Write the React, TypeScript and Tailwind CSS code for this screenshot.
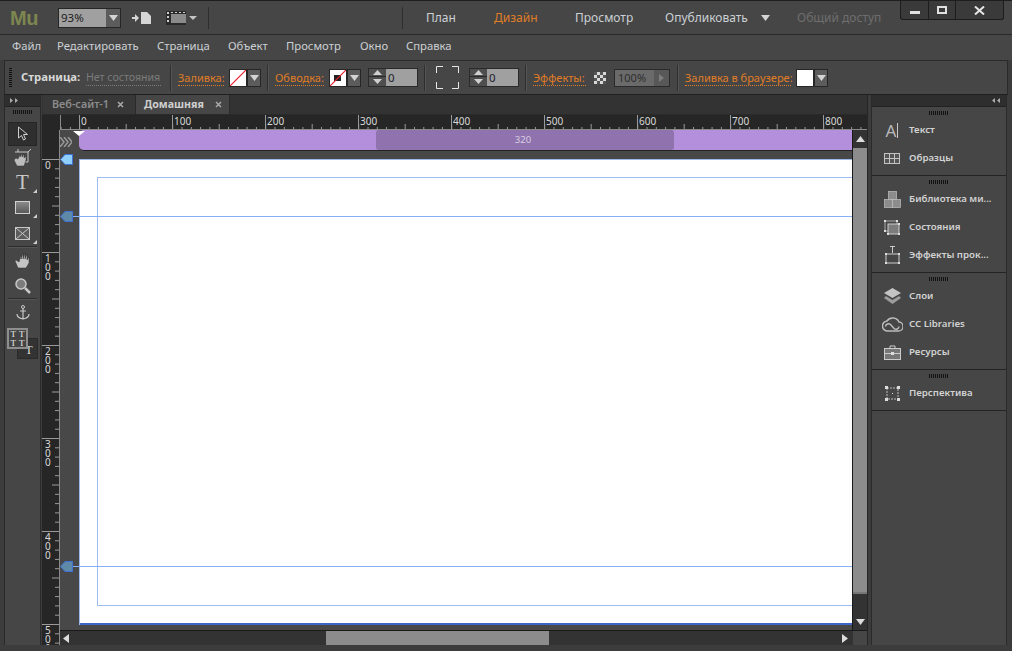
const font = { fontFamily: '"Noto Sans", "Liberation Sans", sans-serif' };

const MENU: [string, string][] = [
  ["Файл", "w-[45px]"],
  ["Редактировать", "w-[100px]"],
  ["Страница", "w-[71px]"],
  ["Объект", "w-[58px]"],
  ["Просмотр", "w-[74px]"],
  ["Окно", "w-[46px]"],
  ["Справка", "w-[60px]"],
];
const TOP_RULER = [0, 100, 200, 300, 400, 500, 600, 700, 800];
const LEFT_RULER = [["0"], ["1", "0", "0"], ["2", "0", "0"], ["3", "0", "0"], ["4", "0", "0"], ["5", "0", "0"]];

function Caret({ dark = false }: { dark?: boolean }) {
  return (
    <svg width="9" height="6" viewBox="0 0 9 6">
      <path d="M0 0h9L4.5 6z" fill={dark ? "#9a9a9a" : "#d4d4d4"} />
    </svg>
  );
}

function DropBtn() {
  return (
    <div className="w-[14px] h-[18px] bg-[#5c5c5c] border border-[#262626] flex items-center justify-center">
      <Caret />
    </div>
  );
}

function Swatch({ stroke = false, none = true }: { stroke?: boolean; none?: boolean }) {
  return (
    <div className="w-[18px] h-[18px] bg-white border border-[#262626] shrink-0">
      {none && (
        <svg width="16" height="16" viewBox="0 0 16 16" className="block">
          {stroke && <rect x="4" y="5" width="7" height="6" fill="#222" />}
          <path d="M0 16L16 0" stroke="#e8202c" strokeWidth="1.2" />
        </svg>
      )}
    </div>
  );
}

function Stepper() {
  return (
    <div className="flex h-[19px] border border-[#2a2a2a] shrink-0">
      <div className="w-[17px] flex flex-col bg-[#4e4e4e]">
        <div className="h-[8px] flex items-center justify-center border-b border-[#2a2a2a]">
          <svg width="9" height="5" viewBox="0 0 9 5"><path d="M0 5h9L4.5 0z" fill="#cfcfcf" /></svg>
        </div>
        <div className="flex-1 flex items-center justify-center">
          <svg width="9" height="5" viewBox="0 0 9 5"><path d="M0 0h9L4.5 5z" fill="#cfcfcf" /></svg>
        </div>
      </div>
      <div className="w-[31px] bg-[#a0a0a0] text-[#20202c] text-[11.5px] leading-[17px] pl-[2px]">0</div>
    </div>
  );
}

function Sep({ className = "" }: { className?: string }) {
  return <div className={`w-px h-[26px] bg-[#2e2e2e] border-r border-[#555] box-content shrink-0 ${className}`} />;
}

function Grip({ w = 20 }: { w?: number }) {
  return (
    <svg width={w} height="4" viewBox={`0 0 ${w} 4`} className="block">
      {Array.from({ length: Math.floor(w / 2) }).map((_, i) => (
        <rect key={i} x={i * 2} y="0" width="1" height="4" fill="#111" />
      ))}
    </svg>
  );
}

function Orange({ children, className = "" }: { children: string; className?: string }) {
  return (
    <span className={`text-[11px] leading-[15px] text-[#e07d25] border-b border-dotted border-[#e07d25] whitespace-nowrap shrink-0 ${className}`}>
      {children}
    </span>
  );
}

function PanelItem({ icon, label }: { icon: React.ReactNode; label: string }) {
  return (
    <div className="h-[28px] flex items-center">
      <div className="w-[37px] flex justify-center pl-[3px] shrink-0">{icon}</div>
      <span className="text-[9.7px] font-semibold text-[#d2d2d2] whitespace-nowrap">{label}</span>
    </div>
  );
}

function PanelGroup({ children, h }: { children: React.ReactNode; h: string }) {
  return (
    <div className={`border-b border-[#242424] ${h}`}>
      <div className="flex justify-center pt-[4px] pb-[1px]"><Grip w={20} /></div>
      {children}
    </div>
  );
}

function Tool({ children, h = "h-[25px]", corner = false }: { children: React.ReactNode; h?: string; corner?: boolean }) {
  return (
    <div className={`relative flex items-center justify-center ${h}`}>
      {children}
      {corner && <div className="absolute right-[3px] bottom-[2px] w-0 h-0 border-l-[4px] border-l-transparent border-b-[4px] border-b-[#cfcfcf]" />}
    </div>
  );
}

function TopRuler() {
  return (
    <div className="relative h-[15px] shrink-0 bg-[#262626] pl-[37px] flex overflow-hidden">
      {TOP_RULER.map((n) => (
        <div key={n} className="w-[93px] shrink-0 border-l border-[#9a9a9a] h-[15px] pl-[1px] text-[10px] leading-[12px] text-[#d8d8d8]">{n}</div>
      ))}
      <svg className="absolute left-[18px] top-0" width="810" height="15">
        <line x1="0.5" y1="0" x2="0.5" y2="15" stroke="#8a8a8a" />
        {Array.from({ length: 90 }).map((_, i) => (
          <line key={i} x1={1.1 + i * 9.3} y1={i % 5 === 2 ? 9 : 12} x2={1.1 + i * 9.3} y2="15" stroke="#9a9a9a" />
        ))}
      </svg>
      <div className="absolute left-[18px] right-0 bottom-0 h-px bg-[#8a8a8a]" />
    </div>
  );
}

function LeftRuler() {
  return (
    <div className="relative w-[18px] shrink-0 bg-[#262626] pt-[29px] overflow-hidden">
      {LEFT_RULER.map((digits, i) => (
        <div key={i} className="h-[93px] border-t border-[#9a9a9a] pl-[3px] pt-[1px] text-[10px] leading-[9px] text-[#d8d8d8]">
          {digits.map((d, j) => <div key={j}>{d}</div>)}
        </div>
      ))}
      <svg className="absolute left-0 top-0" width="18" height="530">
        {Array.from({ length: 53 }).map((_, i) => (
          <line key={i} x1={i % 5 === 0 ? 10 : 13} y1={29.5 + i * 9.3} x2="17" y2={29.5 + i * 9.3} stroke="#9a9a9a" />
        ))}
      </svg>
      <div className="absolute right-0 top-0 bottom-0 w-px bg-[#8a8a8a]" />
    </div>
  );
}

function GuideHandle({ active = false, className }: { active?: boolean; className: string }) {
  return (
    <svg className={`absolute left-0 ${className}`} width="13" height="11" viewBox="0 0 13 11">
      <path d="M.5 5.500L5 .5h7.500v10H5z" fill={active ? "#8fd0fa" : "#5e8aa8"} stroke="#3f72d8" />
    </svg>
  );
}

export default function App() {
  return (
    <div style={font} className="w-[1012px] h-[651px] bg-[#3c3c3c] flex flex-col overflow-hidden relative border-t border-[#1e1e1e]">
      {/* Title bar */}
      <div className="h-[34px] shrink-0 flex items-center border-b border-[#2a2a2a] bg-[#464646] relative">
        <span style={{ fontFamily: '"Liberation Sans", sans-serif' }} className="ml-[10px] w-[48px] text-[20px] font-bold tracking-[-0.5px] leading-[30px] text-[#7d8650]">Mu</span>
        <div className="flex h-[20px] border border-[#262626]">
          <div className="w-[47px] bg-[#a0a0a0] text-[11.5px] leading-[18px] pl-[2px] text-[#1d1d1d]">93%</div>
          <div className="w-[14px] bg-[#5c5c5c] flex items-center justify-center"><Caret /></div>
        </div>
        <svg className="ml-[11px]" width="21" height="14" viewBox="0 0 21 14">
          <path d="M0 6h3V3l4 4-4 4V8H0z" fill="#d6d6d6" />
          <path d="M9 1h6l4 4v8H9z" fill="#d6d6d6" />
        </svg>
        <svg className="ml-[13px]" width="32" height="16" viewBox="0 0 32 16">
          <rect x="0" y="1" width="20" height="14" fill="#2a2a2a" />
          <rect x="5" y="4" width="15" height="9" fill="#8a8a8a" />
          <path d="M1 2h2v2H1zM5 2h2v1H5zM9 2h2v1H9zM13 2h2v1h-2zM17 2h2v1h-2zM1 6h2v2H1zM1 10h2v2H1z" fill="#ccc" />
          <path d="M23 6h8l-4 4z" fill="#c4c4c4" />
        </svg>
        <div className="ml-[10px] w-px h-[22px] bg-[#2e2e2e]" />
        <div className="ml-[193px] w-px h-[22px] bg-[#2e2e2e]" />
        <div className="ml-[23px] w-[68px] text-[12px] text-[#cbd0d4]">План</div>
        <div className="w-[81px] text-[12px] text-[#e07d25]">Дизайн</div>
        <div className="w-[90px] text-[12px] text-[#cbd0d4]">Просмотр</div>
        <div className="w-[96px] text-[12px] text-[#cbd0d4]">Опубликовать</div>
        <div className="w-[36px] flex"><Caret /></div>
        <div className="text-[12px] text-[#6e6e6e] whitespace-nowrap">Общий доступ</div>
        {/* Window controls */}
        <div className="absolute right-[8px] top-0 h-[19px] flex bg-[#3a3a3a] border border-t-0 border-[#1c1c1c] rounded-b-[3px]">
          <div className="w-[28px] flex items-center justify-center border-r border-[#1c1c1c]">
            <div className="w-[10px] h-[3px] mt-[5px] bg-[#e0e0e0]" />
          </div>
          <div className="w-[27px] flex items-center justify-center border-r border-[#1c1c1c]">
            <div className="w-[10px] h-[8px] border-2 border-[#e0e0e0]" />
          </div>
          <div className="w-[47px] flex items-center justify-center">
            <svg width="11" height="9" viewBox="0 0 11 9"><path d="M1 .5l9 8M10 .5l-9 8" stroke="#e6e6e6" strokeWidth="2" /></svg>
          </div>
        </div>
      </div>

      {/* Menu */}
      <div className="h-[25px] shrink-0 flex items-center pb-[3px] pl-[12px] bg-[#464646] text-[11.3px] text-[#cbd0d4]">
        {MENU.map(([m, w]) => <div key={m} className={w}>{m}</div>)}
      </div>

      {/* Options bar */}
      <div className="h-[35px] shrink-0 mx-[4px] bg-[#464646] border border-[#2a2a2a] border-b-[#1f1f1f] flex items-center">
        <svg className="ml-[4px]" width="3" height="20"><path d="M0 .5h3M0 2.500h3M0 4.500h3M0 6.500h3M0 8.500h3M0 10.500h3M0 12.500h3M0 14.500h3M0 16.500h3M0 18.500h3" stroke="#111" /></svg>
        <span className="ml-[9px] w-[65px] text-[11.3px] font-bold text-[#d8d8d8] shrink-0">Страница:</span>
        <span className="w-[75px] text-[10.6px] leading-[15px] text-[#7b7b7b] border-b border-dotted border-[#7b7b7b] whitespace-nowrap shrink-0">Нет состояния</span>
        <Sep className="ml-[9px]" />
        <Orange className="ml-[6px] w-[46px]">Заливка:</Orange>
        <div className="ml-[5px] flex"><Swatch /><DropBtn /></div>
        <Sep className="ml-[6px]" />
        <Orange className="ml-[6px] w-[49px]">Обводка:</Orange>
        <div className="ml-[5px] flex"><Swatch stroke /><DropBtn /></div>
        <div className="ml-[7px]"><Stepper /></div>
        <Sep className="ml-[6px]" />
        <svg className="ml-[10px]" width="23" height="23" viewBox="0 0 23 23">
          <path d="M.5 7V.5H7M16 .5h6.500V7M22.500 16v6.500H16M7 22.500H.5V16" stroke="#e6e6e6" fill="none" />
        </svg>
        <div className="ml-[10px]"><Stepper /></div>
        <Sep className="ml-[6px]" />
        <Orange className="ml-[6px] w-[53px]">Эффекты:</Orange>
        <svg className="ml-[8px]" width="12" height="12" viewBox="0 0 12 12">
          <rect width="12" height="12" fill="#d8d8d8" />
          <path d="M0 0h3v3H0zM6 0h3v3H6zM3 3h3v3H3zM9 3h3v3H9zM0 6h3v3H0zM6 6h3v3H6zM3 9h3v3H3zM9 9h3v3H9z" fill="#555" />
        </svg>
        <div className="ml-[8px] flex h-[18px] border border-[#2a2a2a] shrink-0">
          <div className="w-[39px] bg-[#6a6a6a] text-[#2e2e2e] text-[11px] leading-[16px] pl-[3px]">100%</div>
          <div className="w-[15px] bg-[#585858] flex items-center justify-center">
            <svg width="5" height="8" viewBox="0 0 5 8"><path d="M0 0l5 4-5 4z" fill="#7d7d7d" /></svg>
          </div>
        </div>
        <Sep className="ml-[7px]" />
        <Orange className="ml-[6px] w-[106px]">Заливка в браузере:</Orange>
        <div className="ml-[5px] flex"><Swatch none={false} /><DropBtn /></div>
      </div>

      {/* Workspace */}
      <div className="flex-1 min-h-0 flex bg-[#3c3c3c] pl-[4px] pr-[5px] pb-[6px]">
        {/* Toolbar */}
        <div className="w-[37px] shrink-0 flex flex-col bg-[#464646] border-x border-[#2a2a2a] relative">
          <div className="h-[12px] bg-[#2e2e2e] flex items-center pl-[5px] border-b border-[#222]">
            <svg width="9" height="5" viewBox="0 0 9 5"><path d="M0 0l3 2.500L0 5zM5 0l3 2.500L5 5z" fill="#aaa" /></svg>
          </div>
          <div className="flex justify-center pt-[3px] pb-[8px]"><Grip w={20} /></div>
          <div className="mx-[3px] h-[24px] shrink-0 bg-[#2f2f2f] border border-[#262626] flex items-center justify-center">
            <svg width="12" height="16" viewBox="0 0 12 16"><path d="M1.500 1v11l3-2.500 2 4.500 2-1-2-4.500h4z" fill="none" stroke="#cfcfcf" /></svg>
          </div>
          <Tool h="h-[24px]">
            <svg width="19" height="18" viewBox="0 0 19 18">
              <path d="M5 3h10v10H5M15 3l3-3M2 3h3V0" stroke="#c8c8c8" fill="none" />
              <path d="M1 11l3 6h7l2-6V7L11 9V5L9 8V4L7 8V5L5 10 3 9z" fill="#bcbcbc" stroke="#333" strokeWidth=".5" />
            </svg>
          </Tool>
          <Tool corner>
            <span style={{ fontFamily: '"Liberation Serif", serif' }} className="text-[21px] leading-none text-[#c8c8c8]">T</span>
          </Tool>
          <Tool corner>
            <div className="w-[15px] h-[13px] bg-gradient-to-b from-[#8a8a8a] to-[#5a5a5a] border border-[#d0d0d0]" />
          </Tool>
          <Tool corner h="h-[26px]">
            <svg width="15" height="13" viewBox="0 0 15 13"><rect x=".5" y=".5" width="14" height="12" fill="#5c5c5c" stroke="#c8c8c8" /><path d="M1 1l13 11M14 1L1 12" stroke="#c8c8c8" /></svg>
          </Tool>
          <div className="mx-[3px] h-px bg-[#2e2e2e] border-b border-[#555] box-content" />
          <Tool>
            <svg width="17" height="17" viewBox="0 0 17 17"><path d="M1 9l3 7h8l3-5V5l-2 3V2l-2 5V1L9 7V1L7 7V3L5 10 2 8z" fill="#c4c4c4" stroke="#2e2e2e" strokeWidth=".5" /></svg>
          </Tool>
          <Tool>
            <svg width="17" height="17" viewBox="0 0 17 17"><circle cx="7" cy="7" r="5" fill="#7c7c7c" stroke="#c8c8c8" strokeWidth="1.500" /><path d="M11 11l5 5" stroke="#c8c8c8" strokeWidth="2.500" /></svg>
          </Tool>
          <div className="mx-[3px] h-px bg-[#2e2e2e] border-b border-[#555] box-content" />
          <Tool>
            <svg width="14" height="15" viewBox="0 0 14 15"><circle cx="7" cy="2" r="1.500" fill="none" stroke="#c8c8c8" /><path d="M7 3.500V14M4 6h6M1 9c0 3 3 4.500 6 5 3-.5 6-2 6-5" fill="none" stroke="#c8c8c8" strokeWidth="1.200" /></svg>
          </Tool>
          {/* Overlapping text-flow buttons */}
          <div className="absolute left-[12px] top-[243px] w-[21px] h-[21px] bg-[#333] border border-[#2a2a2a] flex items-center justify-center">
            <span style={{ fontFamily: '"Liberation Serif", serif' }} className="text-[12px] text-[#ddd] ml-[3px] mt-[2px]">T</span>
          </div>
          <div className="absolute left-[2px] top-[233px] w-[21px] h-[21px] bg-[#444] border-2 border-[#8e8e8e] grid grid-cols-2 place-items-center">
            {["T", "T", "T", "T"].map((t, i) => (
              <span key={i} style={{ fontFamily: '"Liberation Serif", serif' }} className="text-[9px] leading-[8px] text-[#eee]">{t}</span>
            ))}
          </div>
        </div>

        {/* Center */}
        <div className="flex-1 min-w-0 flex flex-col mx-[1px] border-r border-[#262626]">
          {/* Tabs */}
          <div className="h-[20px] shrink-0 bg-[#333] flex pl-[1px] border-b border-[#2a2a2a]">
            <div className="w-[92px] flex items-center pl-[9px] gap-[8px] bg-[#383838]">
              <span className="text-[10.8px] font-semibold text-[#8c8c8c] whitespace-nowrap">Веб-сайт-1</span>
              <svg width="7" height="7" viewBox="0 0 7 7"><path d="M1 1l5 5M6 1L1 6" stroke="#aaa" strokeWidth="1.500" /></svg>
            </div>
            <div className="w-[95px] flex items-center pl-[8px] gap-[9px] bg-[#464646] border-x border-[#2a2a2a]">
              <span className="w-[62px] text-[10.6px] font-bold text-[#cfcfcf] whitespace-nowrap">Домашняя</span>
              <svg width="7" height="7" viewBox="0 0 7 7"><path d="M1 1l5 5M6 1L1 6" stroke="#aaa" strokeWidth="1.500" /></svg>
            </div>
          </div>

          <TopRuler />

          <div className="flex-1 min-h-0 flex overflow-hidden">
            <LeftRuler />
            <div className="flex-1 min-w-0 flex flex-col bg-[#484848]">
              <div className="flex-1 min-h-0 flex">
                {/* Canvas */}
                <div className="relative flex-1 min-w-0 flex flex-col overflow-hidden pl-[19px] border-r border-[#1a1a1a]">
                  <div className="absolute left-0 top-[7px]">
                    <svg width="12" height="10" viewBox="0 0 12 10"><path d="M0 0l4 5-4 5M4 0l4 5-4 5M8 0l4 5-4 5" fill="none" stroke="#9a9a9a" strokeWidth="1.500" /></svg>
                  </div>
                  <div className="h-[20px] shrink-0 bg-[#b48fdc] rounded-l-[5px] flex items-stretch pl-[297px] border-b border-[#222] box-content">
                    <div className="w-[298px] bg-[#8f72ae] rounded-[3px] flex items-center justify-center pr-[4px] text-[9.5px] text-[#d9cfe4]">320</div>
                  </div>
                  <div className="absolute left-[13px] top-[1px] w-0 h-0 border-x-[6px] border-x-transparent border-t-[5px] border-t-white" />
                  <div className="h-[8px] shrink-0" />
                  <div className="flex-1 bg-white border-t border-[#9db8ea] border-l border-l-[#9db8ea] relative">
                    <div className="absolute left-[17px] top-[17px] right-[-4px] bottom-[19px] border border-[#9fbdf0]" />
                    <div className="absolute left-[-19px] right-0 top-[56px] h-px bg-[#86b0f5]" />
                    <div className="absolute left-[-19px] right-0 top-[406px] h-px bg-[#86b0f5]" />
                    <div className="absolute left-0 right-0 bottom-0 h-[2px] bg-[#3a66c8]" />
                  </div>
                  <div className="h-[5px] shrink-0" />
                  <GuideHandle active className="top-[24px]" />
                  <GuideHandle className="top-[81px]" />
                  <GuideHandle className="top-[431px]" />
                </div>
                {/* Vertical scrollbar */}
                <div className="w-[14px] shrink-0 bg-[#333] flex flex-col">
                  <div className="h-[18px] flex items-center justify-center">
                    <svg width="9" height="6" viewBox="0 0 9 6"><path d="M0 6h9L4.500 0z" fill="#ddd" /></svg>
                  </div>
                  <div className="flex-1 bg-[#8c8c8c] border-b-2 border-[#777]" />
                  <div className="h-[36px] flex items-end justify-center pb-[5px]">
                    <svg width="9" height="6" viewBox="0 0 9 6"><path d="M0 0h9L4.500 6z" fill="#ddd" /></svg>
                  </div>
                </div>
              </div>
              {/* Horizontal scrollbar */}
              <div className="h-[15px] shrink-0 flex bg-[#333] border-t border-[#1a1a1a]">
                <div className="w-[266px] flex items-center pl-[3px]">
                  <svg width="6" height="9" viewBox="0 0 6 9"><path d="M6 0v9L0 4.500z" fill="#ddd" /></svg>
                </div>
                <div className="w-[223px] bg-[#8c8c8c]" />
                <div className="w-[304px] flex items-center justify-end pr-[5px]">
                  <svg width="6" height="9" viewBox="0 0 6 9"><path d="M0 0v9l6-4.500z" fill="#ddd" /></svg>
                </div>
                <div className="flex-1 bg-[#464646]" />
              </div>
            </div>
          </div>
        </div>

        {/* Right panels */}
        <div className="w-[136px] shrink-0 ml-[2px] flex flex-col bg-[#464646] border-x border-[#2a2a2a]">
          <div className="h-[12px] shrink-0 bg-[#2e2e2e] flex items-center justify-end pr-[5px] border-b border-[#222]">
            <svg width="9" height="5" viewBox="0 0 9 5"><path d="M3 0L0 2.500 3 5zM8 0L5 2.500 8 5z" fill="#aaa" /></svg>
          </div>
          <PanelGroup h="h-[69px]">
            <PanelItem label="Текст" icon={
              <div className="flex items-center">
                <span className="text-[17px] leading-none text-[#b8b8b8]">A</span>
                <div className="w-px h-[15px] bg-[#c8c8c8] ml-[1px]" />
              </div>
            } />
            <PanelItem label="Образцы" icon={
              <svg width="16" height="11" viewBox="0 0 16 11"><rect x=".5" y=".5" width="15" height="10" fill="#555" stroke="#c4c4c4" /><path d="M5.500 0v11M10.500 0v11M0 5.500h16" stroke="#c4c4c4" /></svg>
            } />
          </PanelGroup>
          <PanelGroup h="h-[97px]">
            <PanelItem label="Библиотека ми..." icon={
              <svg width="17" height="17" viewBox="0 0 17 17" fill="#8c8c8c" stroke="#c0c0c0" strokeWidth=".7"><rect x="4.500" y=".5" width="8" height="8" /><rect x=".5" y="8.500" width="8" height="8" /><rect x="8.500" y="8.500" width="8" height="8" /></svg>
            } />
            <PanelItem label="Состояния" icon={
              <svg width="17" height="15" viewBox="0 0 17 15"><rect x="1" y="1" width="12" height="10" fill="none" stroke="#aaa" /><rect x="4" y="4" width="11" height="10" fill="#7c7c7c" stroke="#ccc" /><path d="M0 0h2v2H0zM12 0h2v2h-2zM0 10h2v2H0zM14 3h2v2h-2zM3 13h2v2H3zM14 13h2v2h-2z" fill="#ddd" /></svg>
            } />
            <PanelItem label="Эффекты прок..." icon={
              <svg width="17" height="19" viewBox="0 0 17 19"><path d="M6 .5h5M8.500 1v6" stroke="#ccc" fill="none" /><rect x="2" y="8" width="13" height="9" fill="none" stroke="#ccc" /><path d="M1 7h2v2H1zM14 7h2v2h-2zM1 16h2v2H1zM14 16h2v2h-2z" fill="#ddd" /></svg>
            } />
          </PanelGroup>
          <PanelGroup h="h-[97px]">
            <PanelItem label="Слои" icon={
              <svg width="17" height="16" viewBox="0 0 17 16"><path d="M8.500 0L17 5l-8.500 5L0 5z" fill="#c4c4c4" /><path d="M2 8l6.500 4L15 8l2 2-8.500 6L0 10z" fill="#9c9c9c" /></svg>
            } />
            <PanelItem label="CC Libraries" icon={
              <svg width="21" height="15" viewBox="0 0 21 15" fill="none" stroke="#bcbcbc" strokeWidth="1.500"><path d="M6 14a5 5 0 0 1-1-10 7 7 0 0 1 12 1 4.500 4.500 0 0 1-1 9z" /><path d="M3.500 9.500a3 3 0 0 1 5-2l3.500 4a3 3 0 0 0 5-2" /></svg>
            } />
            <PanelItem label="Ресурсы" icon={
              <svg width="17" height="15" viewBox="0 0 17 15"><path d="M6 3V1h5v2" stroke="#ccc" fill="none" /><rect x=".5" y="3.500" width="16" height="11" fill="#777" stroke="#ccc" /><path d="M0 8.500h17" stroke="#ccc" /><rect x="7" y="7" width="3" height="3" fill="#ddd" /></svg>
            } />
          </PanelGroup>
          <PanelGroup h="h-[41px]">
            <PanelItem label="Перспектива" icon={
              <svg width="15" height="15" viewBox="0 0 15 15"><rect x="2" y="2" width="11" height="11" fill="none" stroke="#bbb" strokeDasharray="2 1" /><path d="M0 0h3v3H0zM12 0h3v3h-3zM0 12h3v3H0zM12 12h3v3h-3zM7 7h1v1H7z" fill="#ddd" /></svg>
            } />
          </PanelGroup>
        </div>
      </div>
    </div>
  );
}
